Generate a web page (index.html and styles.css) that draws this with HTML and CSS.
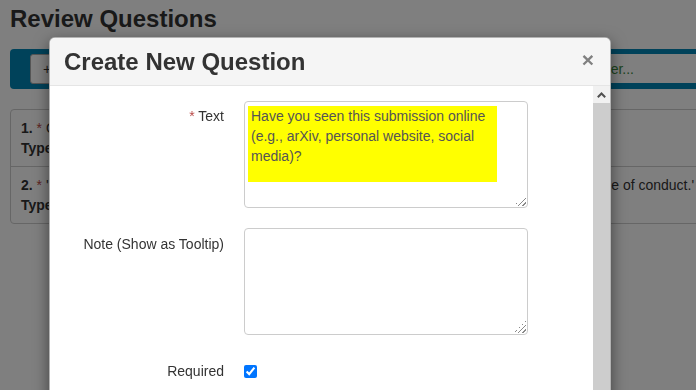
FILE: index.html
```html
<!DOCTYPE html>
<html>
<head>
	<meta charset="utf-8">
	<title>Review Questions</title>
	<link rel="stylesheet" href="styles.css">
</head>
<body>
<div class="page">
	<h1 class="page-title">Review Questions</h1>
	<div class="toolbar">
		<button class="btn-add">+ Add Question</button>
		<input class="filter" type="text" placeholder="Filter...">
	</div>
	<ul class="questions">
		<li>
			<div><b>1.</b> <span class="req">*</span> Overall, how would you rate the quality of this submission?</div>
			<div><b>Type:</b> Single choice</div>
		</li>
		<li>
			<div><b>2.</b> <span class="req">*</span> 'I confirm that I have read and will follow the reviewer guidelines, policies and the entire code of conduct.'</div>
			<div><b>Type:</b> Agreement</div>
		</li>
	</ul>
</div>

<div class="backdrop"></div>

<div class="modal">
	<div class="modal-header">
		<h2 class="modal-title">Create New Question</h2>
		<span class="close">&times;</span>
	</div>
	<div class="modal-body">
		<div class="form">
			<div class="form-row">
				<label class="form-label"><span class="req">*</span> Text</label>
				<div class="field">
					<div class="textbox">
						<div class="hilite">Have you seen this submission online (e.g., arXiv, personal website, social media)?</div>
					</div>
				</div>
			</div>
			<div class="form-row">
				<label class="form-label">Note (Show as Tooltip)</label>
				<div class="field">
					<textarea class="textbox"></textarea>
				</div>
			</div>
			<div class="form-row">
				<label class="form-label">Required</label>
				<div><input class="check" type="checkbox" checked></div>
			</div>
		</div>
		<div class="vscroll">
			<div class="vscroll-up">
				<svg width="9" height="6" viewBox="0 0 9 6"><path d="M0.8 5.2 L4.5 1.5 L8.2 5.2" fill="none" stroke="#505050" stroke-width="2"/></svg>
			</div>
			<div class="vscroll-thumb"></div>
		</div>
	</div>
</div>
</body>
</html>
```

FILE: styles.css
```css
html,body{height:100%;overflow:hidden;}
body,div,ul,li,h1,h2{margin:0;padding:0;}
body{font:14px/20px "Liberation Sans",Arial,sans-serif;color:#333;background:#fff;}
ul{list-style-type:none;}

.page{width:720px;padding-left:10px;}
.page-title{font-size:24px;line-height:30px;font-weight:bold;margin-top:4px;}
.toolbar{display:flex;margin-top:15px;padding:5px 0 5px 20px;background:#0084b4;border-radius:4px 0 0 4px;}
.btn-add{height:30px;padding:0 12px;font:14px "Liberation Sans",Arial,sans-serif;color:#333;background:#fff;border:1px solid #aaa;border-radius:3px;}
.filter{margin-left:auto;margin-right:5px;width:145px;height:29px;box-sizing:border-box;padding:0 12px;border:0;font:14px "Liberation Sans",Arial,sans-serif;}
.filter::placeholder{color:#3c8a3c;}
.questions{margin-top:20px;border:1px solid #ccc;border-radius:4px;}
.questions li{padding:8px 10px;white-space:nowrap;}
.questions li+li{border-top:1px solid #ccc;}
.req{color:#b94a48;}

.backdrop{position:fixed;top:0;left:0;right:0;bottom:0;background:rgba(0,0,0,.5);}

.modal{position:absolute;top:37px;left:49px;width:560px;background:#fff;border:1px solid rgba(0,0,0,.3);border-radius:6px;box-shadow:0 5px 15px rgba(0,0,0,.5);overflow:hidden;}
.modal-header{display:flex;align-items:center;height:47px;padding:0 16px 0 14px;background:#f5f5f5;border-bottom:1px solid #e5e5e5;}
.modal-title{flex:1;font-size:24px;line-height:30px;font-weight:bold;color:#333;margin-top:1px;}
.close{font-size:21px;font-weight:bold;color:#808080;margin-top:-3px;}
.modal-body{display:flex;min-height:400px;}
.form{flex:1;padding-top:15px;}
.form-row{display:grid;grid-template-columns:174px 284px;column-gap:20px;margin-bottom:20px;}
.form-label{text-align:right;padding-top:5px;}
.field{position:relative;width:284px;height:107px;}
.field::after{content:"";position:absolute;right:2px;bottom:2px;width:12px;height:12px;background:linear-gradient(135deg,#fff 50%,transparent 50%),repeating-linear-gradient(135deg,#fff 0 2px,#8a8a8a 2px 3px);}
.textbox{display:block;box-sizing:border-box;width:284px;height:107px;padding:4px 3px;border:1px solid #ccc;border-radius:4px;resize:none;overflow:hidden;font:14px/20px "Liberation Sans",Arial,sans-serif;}
.hilite{width:246px;height:76px;padding-left:3px;background:#ff0;color:#555;}
.form-row:nth-child(2) .form-label{padding-top:6px;}
.form-row:nth-child(3){margin-top:19px;}
.form-row:nth-child(3) .form-label{padding-top:6px;}
.check{margin:10px 0 0 0;width:13px;height:13px;}
.vscroll{flex:none;width:17px;display:flex;flex-direction:column;background:#f1f1f1;}
.vscroll-up{height:17px;display:flex;align-items:center;justify-content:center;}
.vscroll-thumb{flex:1;background:#cdcdcd;}
```
